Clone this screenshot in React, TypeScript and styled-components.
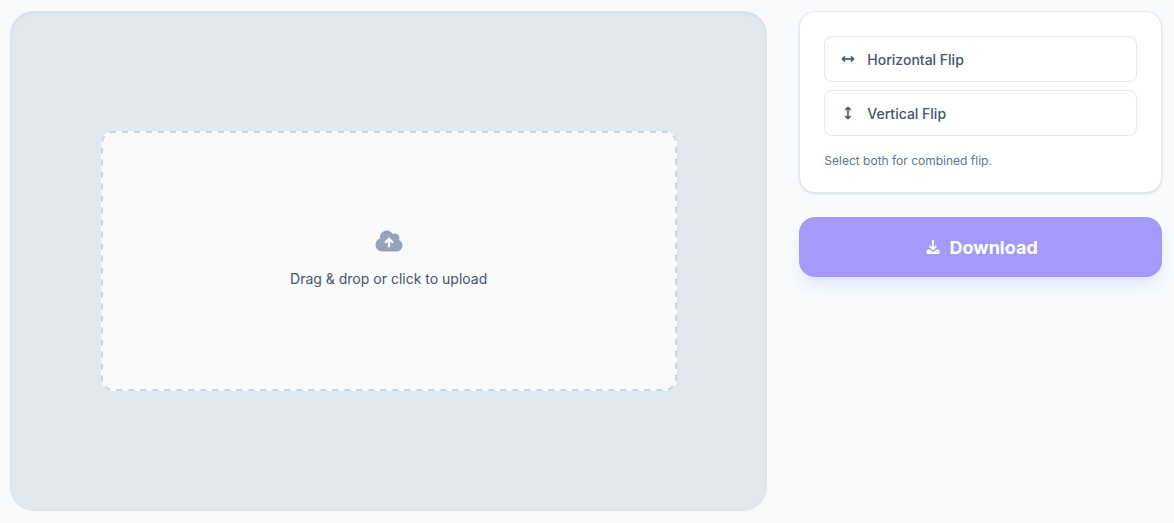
import React from "react";
import styled, { createGlobalStyle } from "styled-components";

const GlobalStyle = createGlobalStyle`
  *, *::before, *::after { box-sizing: border-box; }
  body {
    margin: 0;
    background: #f8fafc;
    color: #475569;
    font-family: Inter, "Liberation Sans", sans-serif;
    font-size: 14px;
    line-height: 20px;
  }
  button { font: inherit; cursor: pointer; }
`;

const Page = styled.main`
  display: grid;
  grid-template-columns: repeat(3, minmax(0, 1fr));
  gap: 32px;
  align-items: start;
  max-width: 1174px;
  margin: 0 auto;
  padding: 11px 12px 12px 10px;
`;

const Workspace = styled.section`
  grid-column: span 2;
  display: flex;
  align-items: center;
  justify-content: center;
  min-height: 500px;
  padding: 32px;
  border-radius: 24px;
  background: #e2e8f0;
  box-shadow: inset 0 2px 4px rgba(0, 0, 0, 0.05);
`;

const DropZone = styled.button`
  position: relative;
  display: flex;
  flex-direction: column;
  align-items: center;
  justify-content: center;
  gap: 12px;
  width: 100%;
  max-width: 576px;
  min-height: 260px;
  padding: 24px;
  border: 0;
  border-radius: 12px;
  background: #f8fafc;
  color: #475569;
`;

const DashedOutline = styled.svg`
  position: absolute;
  inset: 0;
  width: 100%;
  height: 100%;
  pointer-events: none;

  rect {
    width: calc(100% - 2px);
    height: calc(100% - 2px);
    fill: none;
    stroke: #cbd5e1;
    stroke-width: 2px;
    stroke-dasharray: 6 6;
    stroke-dashoffset: 3px;
  }
`;

const DropLabel = styled.span`
  line-height: 28px;
`;

const Sidebar = styled.aside`
  display: flex;
  flex-direction: column;
  gap: 24px;
`;

const Card = styled.div`
  display: flex;
  flex-direction: column;
  gap: 8px;
  padding: 24px 24px 23px;
  border: 1px solid #e2e8f0;
  border-radius: 16px;
  background: #ffffff;
  box-shadow: 0 1px 3px rgba(0, 0, 0, 0.1), 0 1px 2px -1px rgba(0, 0, 0, 0.1);
`;

const ButtonLabel = styled.span`
  padding-top: 2px;
`;

const FlipButton = styled.button`
  display: flex;
  align-items: center;
  gap: 12px;
  padding: 11px 16px;
  border: 1px solid #e2e8f0;
  border-radius: 8px;
  background: #ffffff;
  color: #475569;
  font-weight: 500;
  text-align: left;
`;

const Hint = styled.p`
  margin: 9px 0 0;
  color: #64748b;
  font-size: 12px;
  line-height: 16px;
`;

const DownloadButton = styled.button`
  display: flex;
  align-items: center;
  justify-content: center;
  gap: 8px;
  padding: 15px 24px;
  border: 0;
  border-radius: 16px;
  background: #a599f9;
  color: #ffffff;
  box-shadow: 0 10px 15px -3px #e0e7ff, 0 4px 6px -4px #e0e7ff;
  && { font-size: 18px; font-weight: 700; line-height: 28px; }
`;

const Icon = styled.svg<{ $width: number; $height: number; $color?: string }>`
  flex: none;
  width: ${(p) => p.$width}px;
  height: ${(p) => p.$height}px;
  color: ${(p) => p.$color ?? "inherit"};
  fill: currentColor;
`;

const CloudIcon = () => (
  <Icon $width={28} $height={24} $color="#94a3b8" viewBox="0 0 576 512" aria-hidden="true">
    <path d="M144 480c-79.5 0-144-64.5-144-144 0-63.4 41-117.2 97.9-136.5-1.3-7.7-1.9-15.5-1.9-23.5 0-79.5 64.5-144 144-144 55.4 0 103.5 31.3 127.6 77.1 14.2-8.3 30.8-13.1 48.4-13.1 53 0 96 43 96 96 0 15.7-3.8 30.6-10.5 43.7 44 20.3 74.5 64.7 74.5 116.3 0 70.7-57.3 128-128 128l-304 0zM305 191c-9.4-9.4-24.6-9.4-33.9 0l-72 72c-9.4 9.4-9.4 24.6 0 33.9s24.6 9.4 33.9 0l31-31 0 102.1c0 13.3 10.7 24 24 24s24-10.7 24-24l0-102.1 31 31c9.4 9.4 24.6 9.4 33.9 0s9.4-24.6 0-33.9l-72-72z" />
  </Icon>
);

const ArrowsIcon = ({ vertical = false }: { vertical?: boolean }) => (
  <Icon $width={14} $height={14} viewBox="-32 -64 640 640" aria-hidden="true">
    <path
      transform={vertical ? "rotate(90 288 256)" : undefined}
      stroke="currentColor"
      strokeWidth="16"
      d="M566.6 278.6c12.5-12.5 12.5-32.8 0-45.3l-96-96c-12.5-12.5-32.8-12.5-45.3 0s-12.5 32.8 0 45.3l41.4 41.4-357.5 0 41.4-41.4c12.5-12.5 12.5-32.8 0-45.3s-32.8-12.5-45.3 0l-96 96c-12.5 12.5-12.5 32.8 0 45.3l96 96c12.5 12.5 32.8 12.5 45.3 0s12.5-32.8 0-45.3l-41.4-41.4 357.5 0-41.4 41.4c-12.5 12.5-12.5 32.8 0 45.3s32.8 12.5 45.3 0l96-96z"
    />
  </Icon>
);

const DownloadIcon = () => (
  <Icon $width={18} $height={15} viewBox="0 0 448 512" aria-hidden="true">
    <path d="M256 32c0-17.7-14.3-32-32-32s-32 14.3-32 32l0 210.7-41.4-41.4c-12.5-12.5-32.8-12.5-45.3 0s-12.5 32.8 0 45.3l96 96c12.5 12.5 32.8 12.5 45.3 0l96-96c12.5-12.5 12.5-32.8 0-45.3s-32.8-12.5-45.3 0L256 242.7 256 32zM64 320c-35.3 0-64 28.7-64 64l0 32c0 35.3 28.7 64 64 64l320 0c35.3 0 64-28.7 64-64l0-32c0-35.3-28.7-64-64-64l-46.9 0-56.6 56.6c-31.2 31.2-81.9 31.2-113.1 0L110.9 320 64 320zm304 56a24 24 0 1 1 0 48 24 24 0 1 1 0-48z" />
  </Icon>
);

export default function App() {
  return (
    <>
      <GlobalStyle />
      <Page>
        <Workspace>
          <DropZone type="button">
            <DashedOutline aria-hidden="true">
              <rect x="1" y="1" rx="11" />
            </DashedOutline>
            <CloudIcon />
            <DropLabel>Drag &amp; drop or click to upload</DropLabel>
          </DropZone>
        </Workspace>
        <Sidebar>
          <Card>
            <FlipButton type="button">
              <ArrowsIcon />
              <ButtonLabel>Horizontal Flip</ButtonLabel>
            </FlipButton>
            <FlipButton type="button">
              <ArrowsIcon vertical />
              <ButtonLabel>Vertical Flip</ButtonLabel>
            </FlipButton>
            <Hint>Select both for combined flip.</Hint>
          </Card>
          <DownloadButton type="button">
            <DownloadIcon />
            <ButtonLabel>Download</ButtonLabel>
          </DownloadButton>
        </Sidebar>
      </Page>
    </>
  );
}
